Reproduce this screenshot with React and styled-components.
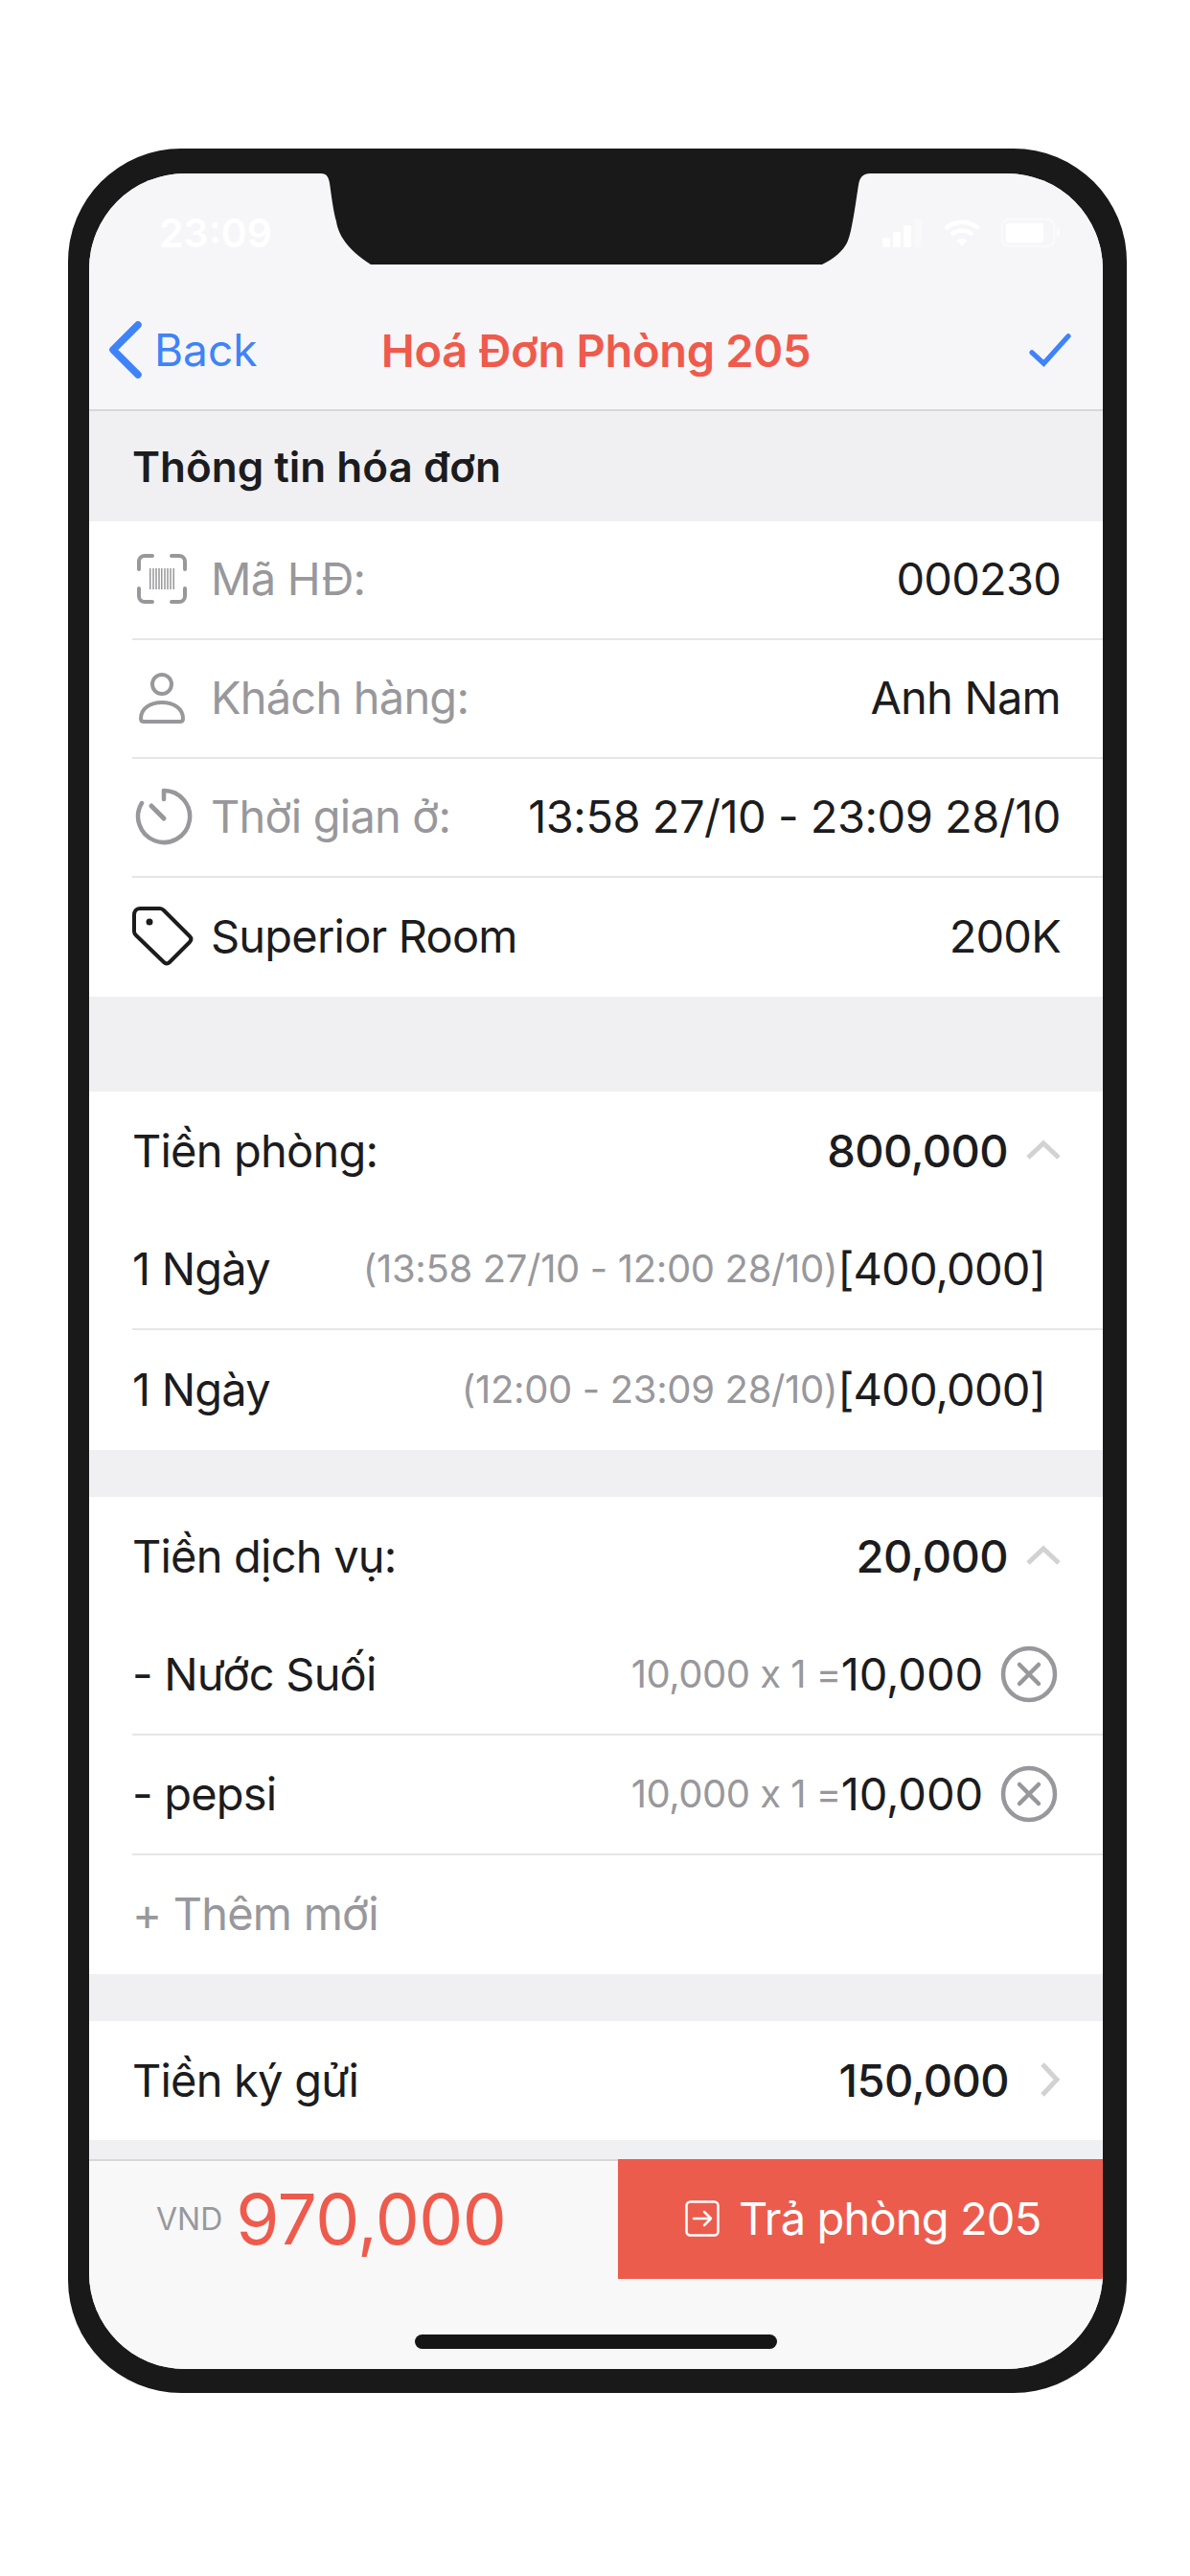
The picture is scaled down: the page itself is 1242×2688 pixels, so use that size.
import React from 'react';
import styled, { createGlobalStyle } from 'styled-components';

const Global = createGlobalStyle`
  html, body { margin: 0; padding: 0; background: #fff; }
  * { box-sizing: border-box; }
  body { font-family: Inter, "Noto Sans", sans-serif; color: #1c1c1e; }
`;

const Page = styled.div`
  width: 1242px;
  height: 2688px;
  padding: 155px 66px 0 71px;
`;

const Phone = styled.div`
  width: 1105px;
  height: 2342px;
  padding: 26px 25px 25px 22px;
  background: #191919;
  border-radius: 118px;
`;

const Screen = styled.div`
  position: relative;
  width: 100%;
  height: 100%;
  display: flex;
  flex-direction: column;
  overflow: hidden;
  background: #f0f0f3;
  border-radius: 100px;
`;

const Notch = styled.svg`
  position: absolute;
  top: 0;
  left: 242px;
`;

const Top = styled.header`
  height: 248px;
  flex: none;
  background: #f6f6f8;
  border-bottom: 2px solid #d8d8da;
`;

const StatusBar = styled.div`
  height: 124px;
  padding: 0 44px 0 73px;
  display: flex;
  align-items: center;
  justify-content: space-between;
  color: #fff;
`;

const Time = styled.span`
  font-size: 41px;
  font-weight: 600;
`;

const StatusIcons = styled.div`
  display: flex;
  align-items: center;
  gap: 22px;
`;

const NavBar = styled.nav`
  height: 120px;
  padding: 0 20px;
  display: grid;
  grid-template-columns: 1fr auto 1fr;
  align-items: center;
`;

const Back = styled.div`
  display: flex;
  align-items: center;
  gap: 12px;
  color: #3f83f8;
  font-size: 46px;
`;

const Title = styled.div`
  color: #ee5b4c;
  font-size: 47px;
  font-weight: 600;
  letter-spacing: -0.3px;
`;

const Done = styled.div`
  display: flex;
  justify-content: flex-end;
  padding-right: 13px;
`;

const Content = styled.main`
  flex: 1;
  min-height: 0;
  overflow: hidden;
`;

const SectionHead = styled.div`
  height: 115px;
  padding-left: 45px;
  display: flex;
  align-items: center;
  font-size: 44px;
  font-weight: 600;
`;

const Block = styled.section`
  background: #fff;
  margin-bottom: ${(p) => p.$gap || 49}px;
`;

const Row = styled.div`
  height: ${(p) => p.$h || 124}px;
  margin-left: 45px;
  padding-right: ${(p) => p.$pr ?? 44}px;
  padding-bottom: ${(p) => p.$lift ?? 2}px;
  display: flex;
  align-items: center;
  justify-content: space-between;
  font-size: 47px;
  letter-spacing: -0.8px;
  border-bottom: ${(p) => (p.$line ? '2px solid #e6e6e8' : 'none')};
`;

const Label = styled.div`
  display: flex;
  align-items: center;
  color: ${(p) => (p.$muted ? '#98989c' : '#1c1c1e')};
`;

const IconBox = styled.span`
  width: 82px;
  padding-left: ${(p) => p.$inset || 0}px;
  flex: none;
  display: flex;
  align-items: center;
`;

const Right = styled.div`
  display: flex;
  align-items: center;
`;

const Strong = styled.span`
  font-weight: 550;
  letter-spacing: -0.6px;
`;

const Figure = styled.span`
  letter-spacing: ${(p) => p.$spacing ?? -0.1}px;
`;

const Note = styled.span`
  color: #98989c;
  font-size: ${(p) => p.$size || 40}px;
  letter-spacing: ${(p) => p.$spacing ?? -0.35}px;
`;

const Chevron = styled.svg`
  margin-left: ${(p) => p.$ml || 19}px;
`;

const Remove = styled.svg`
  margin-left: 18px;
`;

const AddNew = styled.span`
  color: #98989c;
`;

const Footer = styled.footer`
  height: 219px;
  flex: none;
  display: flex;
  flex-direction: column;
  background: #f8f8f9;
`;

const Bar = styled.div`
  height: 125px;
  flex: none;
  display: flex;
`;

const Total = styled.div`
  flex: 1;
  padding: 0 0 2px 70px;
  display: flex;
  align-items: center;
  gap: 14px;
  border-top: 2px solid #d8d8da;
`;

const Currency = styled.span`
  color: #98989c;
  font-size: 32px;
`;

const Amount = styled.span`
  color: #ee5b4c;
  font-size: 73px;
  letter-spacing: -0.5px;
`;

const Checkout = styled.div`
  width: 506px;
  flex: none;
  padding: 0 0 2px 70px;
  display: flex;
  align-items: center;
  gap: 20px;
  background: #ec5c4d;
  color: #fff;
  font-size: 47px;
  letter-spacing: -0.85px;
`;

const HomeArea = styled.div`
  flex: 1;
  display: flex;
  align-items: flex-start;
  justify-content: center;
  padding-top: 58px;
`;

const HomeBar = styled.div`
  width: 378px;
  height: 15px;
  border-radius: 8px;
  background: #161616;
`;

const gray = '#98989c';

const BarcodeIcon = () => (
  <svg width="54" height="54" viewBox="0 0 54 54" fill="none" stroke={gray} strokeWidth="4" strokeLinecap="round">
    <path d="M3 17V9a6 6 0 0 1 6-6h8M37 3h8a6 6 0 0 1 6 6v8M51 37v8a6 6 0 0 1-6 6h-8M17 51H9a6 6 0 0 1-6-6v-8" />
    <path strokeWidth="1.5" strokeLinecap="butt" d="M14.75 16v22M18 16v22M21 16v22M24 16v22M26.75 16v22M30 16v22M33 16v22M36 16v22M39.25 16v22" />
  </svg>
);

const UserIcon = () => (
  <svg width="54" height="54" viewBox="0 0 54 54" fill="none" stroke={gray} strokeWidth="4">
    <circle cx="27" cy="13" r="10" />
    <path d="M5 49c0-11 10-17 22-17s22 6 22 17c0 2-1 3-3 3H8c-2 0-3-1-3-3z" strokeLinejoin="round" />
  </svg>
);

const TimerIcon = () => (
  <svg width="60" height="60" viewBox="0 0 60 60" fill="none" stroke={gray} strokeWidth="4.5" strokeLinecap="round">
    <path d="M30 3a27 27 0 1 1-23 13" />
    <path d="M30 3v9" />
    <path d="M17 19l13 13" strokeWidth="5" />
  </svg>
);

const TagIcon = () => (
  <svg width="64" height="64" viewBox="0 0 64 64" fill="none" stroke="#1c1c1e" strokeWidth="4" strokeLinejoin="round">
    <path d="M8 3h21c2 0 3 1 4 2l27 27c2 2 2 4 0 6L39 59c-2 2-4 2-6 0L4 31c-1-1-2-2-2-4V10c0-4 2-7 6-7z" />
    <circle cx="18" cy="17" r="3.5" fill="#1c1c1e" stroke="none" />
  </svg>
);

const ChevronUp = () => (
  <Chevron $ml={19} width="36" height="22" viewBox="0 0 36 22" fill="none" stroke="#d2d2d4" strokeWidth="5">
    <path d="M2 19L18 4l16 15" />
  </Chevron>
);

const ChevronRight = () => (
  <Chevron $ml={32} width="22" height="36" viewBox="0 0 22 36" fill="none" stroke="#d2d2d4" strokeWidth="5">
    <path d="M3 2l15 16L3 34" />
  </Chevron>
);

const RemoveIcon = () => (
  <Remove width="60" height="60" viewBox="0 0 60 60" fill="none" stroke={gray} strokeWidth="4.5" strokeLinecap="round">
    <circle cx="30" cy="30" r="27" />
    <path d="M20 20l20 20M40 20L20 40" />
  </Remove>
);

export default function App() {
  return (
    <Page>
      <Global />
      <Phone>
        <Screen>
          <Notch width="573" height="95" viewBox="-8 0 573 95">
            <path
              fill="#191919"
              d="M-8 0C-2 0 0 4 1 10C3 24 5 40 8 50C10 64 20 80 44 95L515 95C530 88 539 78 542 70C546 60 549 38 553 12C554 4 558 0 565 0Z"
            />
          </Notch>
          <Top>
            <StatusBar>
              <Time>23:09</Time>
              <StatusIcons>
                <svg width="42" height="30" viewBox="0 0 42 30" fill="#fff">
                  <rect x="0" y="20" width="8" height="10" rx="2" />
                  <rect x="11" y="14" width="8" height="16" rx="2" />
                  <rect x="22" y="7" width="8" height="23" rx="2" />
                  <rect x="33" y="0" width="8" height="30" rx="2" opacity="0.35" />
                </svg>
                <svg width="38" height="30" viewBox="0 0 42 32" fill="none" stroke="#fff" strokeWidth="5">
                  <path d="M2 11C12 1 30 1 40 11M9 18C15 12 27 12 33 18" />
                  <path d="M15 25c3-3 9-3 12 0l-6 6z" fill="#fff" stroke="none" />
                </svg>
                <svg width="62" height="32" viewBox="0 0 66 32" fill="none">
                  <rect x="1" y="1" width="58" height="30" rx="8" stroke="#fff" strokeWidth="2" opacity="0.5" />
                  <rect x="5" y="5" width="42" height="22" rx="4" fill="#fff" />
                  <rect x="61" y="11" width="4" height="10" rx="2" fill="#fff" opacity="0.5" />
                </svg>
              </StatusIcons>
            </StatusBar>
            <NavBar>
              <Back>
                <svg width="36" height="60" viewBox="0 0 36 60" fill="none" stroke="#3f83f8" strokeWidth="7.5" strokeLinecap="round" strokeLinejoin="round">
                  <path d="M31 4L5 30l26 26" />
                </svg>
                Back
              </Back>
              <Title>Hoá Đơn Phòng 205</Title>
              <Done>
                <svg width="44" height="36" viewBox="0 0 46 38" fill="none" stroke="#3f83f8" strokeWidth="5.5" strokeLinecap="round">
                  <path d="M3 22l13 12L43 4" />
                </svg>
              </Done>
            </NavBar>
          </Top>

          <Content>
            <SectionHead>Thông tin hóa đơn</SectionHead>
            <Block $gap={99}>
              <Row $line $lift={3}>
                <Label $muted>
                  <IconBox $inset={4}><BarcodeIcon /></IconBox>
                  Mã HĐ:
                </Label>
                <span>000230</span>
              </Row>
              <Row $line $lift={3}>
                <Label $muted>
                  <IconBox $inset={4}><UserIcon /></IconBox>
                  Khách hàng:
                </Label>
                <span>Anh Nam</span>
              </Row>
              <Row $line $lift={3}>
                <Label $muted>
                  <IconBox $inset={3}><TimerIcon /></IconBox>
                  Thời gian ở:
                </Label>
                <Figure $spacing={-0.5}>13:58 27/10 - 23:09 28/10</Figure>
              </Row>
              <Row $lift={3}>
                <Label>
                  <IconBox><TagIcon /></IconBox>
                  Superior Room
                </Label>
                <span>200K</span>
              </Row>
            </Block>

            <Block>
              <Row>
                <Label>Tiền phòng:</Label>
                <Right>
                  <Strong>800,000</Strong>
                  <ChevronUp />
                </Right>
              </Row>
              <Row $h={125} $line $pr={60}>
                <Label>1 Ngày</Label>
                <Right>
                  <Note>(13:58 27/10 - 12:00 28/10)</Note>
                  <span>[400,000]</span>
                </Right>
              </Row>
              <Row $h={125} $pr={60}>
                <Label>1 Ngày</Label>
                <Right>
                  <Note>(12:00 - 23:09 28/10)</Note>
                  <span>[400,000]</span>
                </Right>
              </Row>
            </Block>

            <Block>
              <Row>
                <Label>Tiền dịch vụ:</Label>
                <Right>
                  <Strong>20,000</Strong>
                  <ChevronUp />
                </Right>
              </Row>
              <Row $h={125} $line $pr={47}>
                <Label>- Nước Suối</Label>
                <Right>
                  <Note $spacing={-0.5}>10,000 x 1 =</Note>
                  <Figure>10,000</Figure>
                  <RemoveIcon />
                </Right>
              </Row>
              <Row $h={125} $line $pr={47}>
                <Label>- pepsi</Label>
                <Right>
                  <Note $spacing={-0.5}>10,000 x 1 =</Note>
                  <Figure>10,000</Figure>
                  <RemoveIcon />
                </Right>
              </Row>
              <Row $lift={4}>
                <AddNew>+ Thêm mới</AddNew>
              </Row>
            </Block>

            <Block>
              <Row>
                <Label>Tiền ký gửi</Label>
                <Right>
                  <Strong>150,000</Strong>
                  <ChevronRight />
                </Right>
              </Row>
            </Block>
          </Content>

          <Footer>
            <Bar>
              <Total>
                <Currency>VND</Currency>
                <Amount>970,000</Amount>
              </Total>
              <Checkout>
                <svg width="36" height="38" viewBox="0 0 36 38" fill="none" stroke="#fff" strokeWidth="2.5" strokeLinecap="round" strokeLinejoin="round">
                  <rect x="1.5" y="1.5" width="33" height="35" rx="4" />
                  <path d="M9 19h18M20 12l7 7-7 7" />
                </svg>
                Trả phòng 205
              </Checkout>
            </Bar>
            <HomeArea>
              <HomeBar />
            </HomeArea>
          </Footer>
        </Screen>
      </Phone>
    </Page>
  );
}
